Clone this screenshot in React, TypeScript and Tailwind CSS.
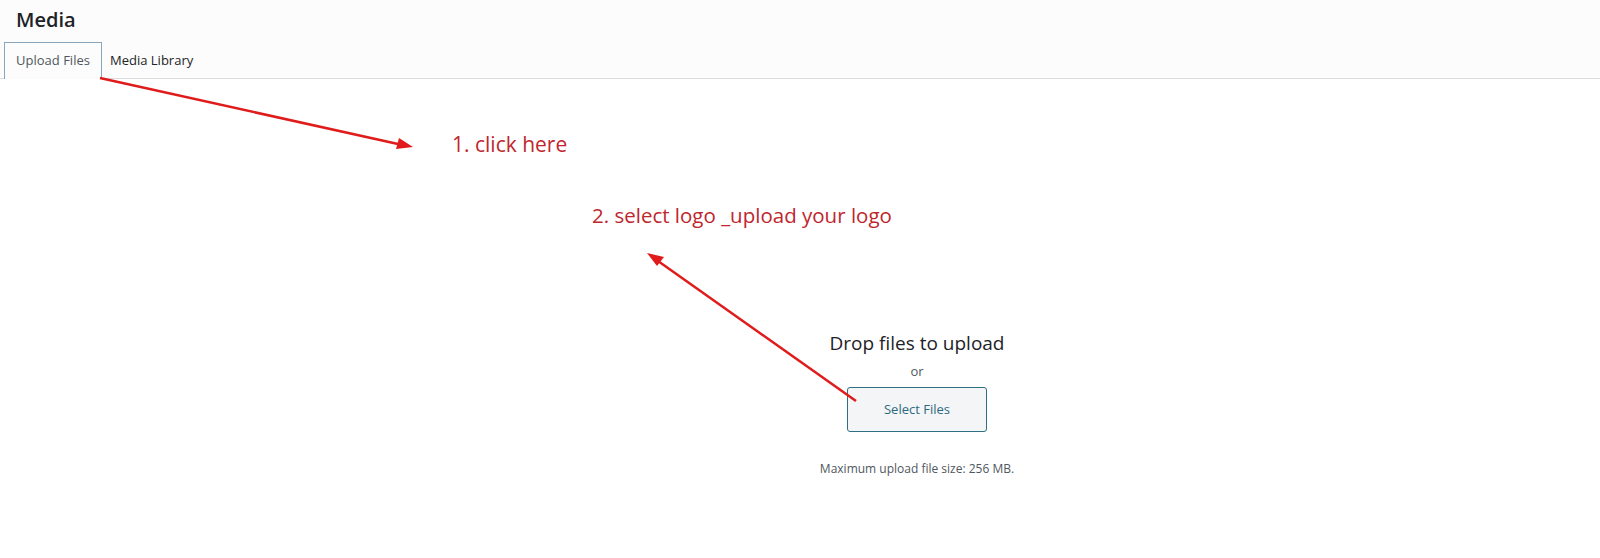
import React from "react";

export default function App() {
  return (
    <div className="relative w-[1600px] h-[558px] bg-white overflow-hidden" style={{ fontFamily: '"Open Sans", "Noto Sans", sans-serif' }}>
      <header className="bg-[#fcfcfc] border-b border-[#dcdcde] h-[79px] flex flex-col">
        <h1 className="pl-4 pt-[6px] text-[20px] leading-[28px] font-semibold text-[#1d2327]">Media</h1>
        <nav className="mt-[8px] pl-[4px] flex items-end">
          <button className="h-[37px] w-[98px] border border-b-0 border-[#8aa6bd] text-[13px] text-[#50575e] bg-[#fcfcfc]">Upload Files</button>
          <button className="h-[37px] pl-[8px] pr-3 text-[13px] text-[#1d2327]">Media Library</button>
        </nav>
      </header>

      <main className="pl-[234px] flex flex-col items-center">
        <h2 className="mt-[251px] text-[19px] leading-[26px] text-[#1d2327]">Drop files to upload</h2>
        <p className="mt-[7px] text-[13px] leading-[16px] text-[#50575e]">or</p>
        <button className="mt-[8px] w-[140px] h-[45px] rounded-[3px] border border-[#2f6f84] bg-[#f4f5f6] text-[13px] text-[#2d6a80]">Select Files</button>
        <p className="mt-[29px] text-[12px] leading-[16px] text-[#50575e]">Maximum upload file size: 256 MB.</p>
      </main>

      <div className="absolute left-[452px] top-[130px] text-[21px] leading-[28px] text-[#c0262d]" style={{ fontFamily: '"Open Sans", sans-serif' }}>1. click here</div>
      <div className="absolute left-[592px] top-[201px] text-[20.5px] leading-[28px] text-[#c0262d]" style={{ fontFamily: '"Open Sans", sans-serif' }}>2. select logo _upload your logo</div>

      <svg className="absolute left-0 top-0 pointer-events-none" width="1600" height="558">
        <line x1="100" y1="78" x2="398" y2="144" stroke="#e01b1b" strokeWidth="2.5" />
        <polygon points="413,147 396,149 399,138" fill="#e01b1b" />
        <line x1="856" y1="401" x2="658" y2="261" stroke="#e01b1b" strokeWidth="2.5" />
        <polygon points="647,253 664,257 657,266" fill="#e01b1b" />
      </svg>
    </div>
  );
}
